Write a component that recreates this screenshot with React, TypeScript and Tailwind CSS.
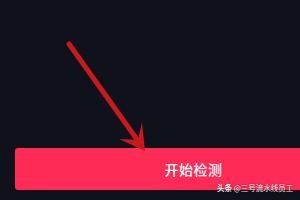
export default function App() {
  return (
    <div
      className="relative w-[300px] h-[200px] overflow-hidden bg-[#0f111b]"
      style={{ fontFamily: '"Noto Sans CJK SC", "Noto Sans", sans-serif' }}
    >
      <div className="flex flex-col pt-[148px] pl-[15px]">
        <button className="h-[42px] w-full rounded-l-[3px] bg-[#fd2b55] flex items-center justify-center pl-[72px]">
          <span className="text-[14px] font-medium text-white tracking-[0.5px] leading-none">开始检测</span>
        </button>
      </div>

      {/* red annotation arrow */}
      <svg className="absolute left-0 top-0" width="300" height="200" viewBox="0 0 300 200">
        <line x1="69" y1="44" x2="141" y2="145" stroke="#c8191c" strokeWidth="5" strokeLinecap="round" />
        <path d="M145 151 L142 122 L138 140 L119 139 Z" fill="#c8191c" />
      </svg>

      {/* watermark */}
      <div className="absolute left-[217px] top-[184px] text-[7.5px] leading-none text-[#eeeeee] whitespace-nowrap [text-shadow:0_0_2px_rgba(0,0,0,0.6)]">
        <span className="font-bold">头条</span> @三号流水线员工
      </div>
    </div>
  );
}
